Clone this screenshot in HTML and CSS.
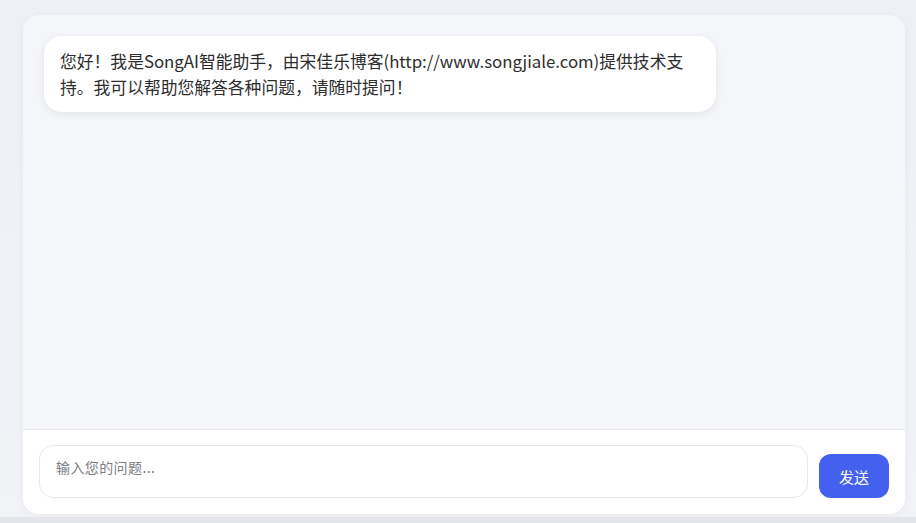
FILE: index.html
```html
<!DOCTYPE html>
<html lang="zh-CN">
<head>
<meta charset="utf-8">
<title>SongAI</title>
<link rel="stylesheet" href="styles.css">
</head>
<body>
<div class="page">
  <div class="chat-card">
    <div class="messages">
      <div class="bubble bot">您好！我是SongAI智能助手，由宋佳乐博客(http://www.songjiale.com)提供技术支持。我可以帮助您解答各种问题，请随时提问！</div>
    </div>
    <div class="composer">
      <textarea class="input" placeholder="输入您的问题..."></textarea>
      <button class="send">发送</button>
    </div>
  </div>
</div>
<div class="bottom-strip"></div>
</body>
</html>
```
FILE: styles.css
```css
html, body {
  margin: 0;
  padding: 0;
  height: 100%;
  overflow: hidden;
}
body {
  background: linear-gradient(180deg, #eff0f6 0%, #f2f3f7 100%);
  font-family: "Noto Sans CJK SC", "Noto Sans", sans-serif;
  display: flex;
  flex-direction: column;
}
.page {
  flex: 1;
  padding: 15px 11px 3px 23px;
  display: flex;
  min-height: 0;
}
.chat-card {
  flex: 1;
  display: flex;
  flex-direction: column;
  background: #f5f6fa;
  border-radius: 16px;
  overflow: hidden;
  box-shadow: 0 2px 10px rgba(30, 40, 80, 0.04);
}
.messages {
  flex: 1;
  padding: 21px 21px;
}
.bubble {
  box-sizing: border-box;
  width: 672px;
  background: #fff;
  color: #2d2d2d;
  font-family: "Noto Sans CJK SC", "Noto Sans", sans-serif;
  font-size: 16.8px;
  line-height: 26px;
  padding: 12px 16px;
  border-radius: 18px;
  box-shadow: 0 2px 8px rgba(0, 0, 0, 0.08);
}
.composer {
  background: #fff;
  border-top: 1px solid #e6e8ee;
  padding: 15px 16px 16px 16px;
  display: flex;
  align-items: flex-end;
  gap: 11px;
}
.input {
  flex: 1;
  height: 53px;
  box-sizing: border-box;
  border: 1px solid #e6e8ee;
  border-radius: 14px;
  padding: 11px 16px;
  font-family: "Noto Sans CJK SC", "Noto Sans", sans-serif;
  font-size: 14px;
  line-height: 20px;
  color: #333;
  resize: none;
  outline: none;
  background: #fff;
}
.input::placeholder {
  color: #7a7d84;
  letter-spacing: 0.4px;
}
.send {
  width: 70px;
  height: 44px;
  border: none;
  border-radius: 12px;
  background: #4361ee;
  color: #fff;
  font-family: "Noto Sans CJK SC", "Noto Sans", sans-serif;
  font-size: 15px;
  cursor: pointer;
  padding: 0;
}
.bottom-strip {
  height: 6px;
  background: #e4e5ea;
}
```
